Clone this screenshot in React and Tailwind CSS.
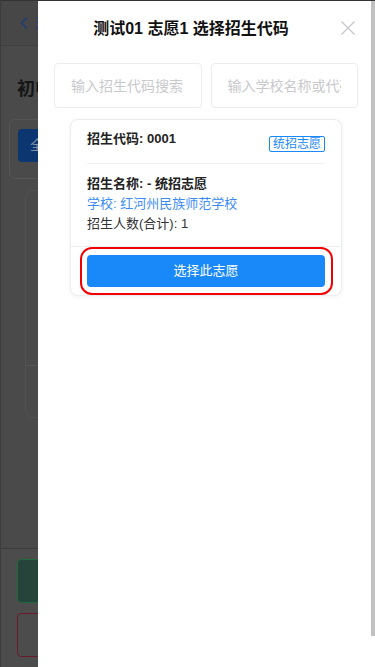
import React from 'react';

const font = { fontFamily: '"Liberation Sans", "Noto Sans CJK SC", sans-serif' };

function BackPage() {
  return (
    <div className="h-[667px] flex flex-col bg-[#4a4a4a] border-t border-[#333] border-l border-l-[#3c3c3c]">
      <div className="h-[45px] flex items-center pl-[18px] gap-[6px] bg-[#474747] border-b border-[#404040] flex-shrink-0">
        <svg width="10" height="14" viewBox="0 0 10 14" fill="none">
          <path d="M8 1.5L2.5 7L8 12.5" stroke="#1f3f73" strokeWidth="1.6" />
        </svg>
        <span className="text-[14px] text-[#1f3f73]">返回</span>
      </div>
      <div className="px-[16px] pt-[30px] text-[18px] font-bold text-[#151515] leading-[26px]">初中志愿填报</div>
      <div className="mx-[8px] mt-[17px] h-[60px] border border-[#555] rounded-[6px] px-[8px] pt-[9px] flex gap-[8px]">
        <div className="h-[33px] px-[12px] rounded-[4px] bg-[#0b3670] text-[#7f8fa6] text-[14px] flex items-center">全部志愿</div>
      </div>
      <div className="mx-[24px] mt-[11px] h-[228px] border border-[#525252] rounded-[8px] flex flex-col">
        <div className="flex-1" />
        <div className="h-[52px] border-t border-[#555]" />
      </div>
      <div className="flex-1" />
      <div className="h-[119px] border-t border-[#3d3d3d] bg-[#4c4c4c] px-[16px] pt-[10px] flex flex-col gap-[10px]">
        <div className="h-[44px] rounded-[4px] bg-[#26443a] border border-[#1f6a3f]" />
        <div className="h-[44px] rounded-[4px] border border-[#6a1b2b]" />
      </div>
    </div>
  );
}

function CodeCard() {
  return (
    <div className="mx-[16px] mt-[11px] border border-[#ebedf0] rounded-[8px] bg-white shadow-[0_1px_4px_rgba(0,0,0,0.06)]">
      <div className="px-[16px] pt-[9px]">
        <div className="flex justify-between items-start pb-[11px] border-b border-[#f0f1f3]">
          <span className="text-[13px] font-bold text-[#222] leading-[20px]">招生代码: 0001</span>
          <span className="mt-[7px] h-[16px] px-[3px] border border-[#1989fa] rounded-[2px] text-[12px] leading-[14px] text-[#1989fa]">统招志愿</span>
        </div>
        <div className="pt-[10px] pb-[12px] text-[13px] leading-[20px]">
          <div className="font-bold text-[#222]">招生名称: - 统招志愿</div>
          <div className="text-[#3c8cf5]">学校: 红河州民族师范学校</div>
          <div className="text-[#323233]">招生人数(合计): 1</div>
        </div>
      </div>
      <div className="border-t border-[#ebedf0] px-[16px] pt-[8px] pb-[8px]">
        <div className="relative">
          <button className="w-full h-[32px] rounded-[4px] bg-[#1989fa] text-white text-[13px]">选择此志愿</button>
          <div className="absolute -left-[7px] -right-[8px] -top-[8px] -bottom-[8px] border-2 border-[#f20000] rounded-[12px]" />
        </div>
      </div>
    </div>
  );
}

export default function App() {
  return (
    <div className="relative w-[375px] h-[667px] overflow-hidden" style={font}>
      <BackPage />
      <div className="absolute top-[1px] bottom-0 left-[38px] right-0 bg-white">
        <div className="h-[55px] flex items-center justify-center pr-[31px]">
          <h3 className="text-[16px] font-bold text-[#111]">测试01 志愿1 选择招生代码</h3>
        </div>
        <button className="absolute right-[20px] top-[20px] w-[14px] h-[14px]">
          <svg width="14" height="14" viewBox="0 0 14 14" fill="none">
            <path d="M0.5 0.5L13.5 13.5M13.5 0.5L0.5 13.5" stroke="#c8c9cc" strokeWidth="1.4" />
          </svg>
        </button>
        <div className="mt-[7px] pl-[16px] pr-[17px] grid grid-cols-2 gap-[9px]">
          <input
            placeholder="输入招生代码搜索"
            className="h-[45px] w-full min-w-0 border border-[#ebedf0] rounded-[4px] px-[16px] text-[14px] placeholder:text-[#c8c9cc] outline-none"
          />
          <input
            placeholder="输入学校名称或代码"
            className="h-[45px] w-full min-w-0 border border-[#ebedf0] rounded-[4px] px-[16px] text-[14px] placeholder:text-[#c8c9cc] outline-none"
          />
        </div>
        <div className="pl-[16px] pr-[17px]">
          <CodeCard />
        </div>
        <div className="absolute right-0 top-0 w-[4px] h-[635px] bg-[#c1c1c1]" />
      </div>
    </div>
  );
}
